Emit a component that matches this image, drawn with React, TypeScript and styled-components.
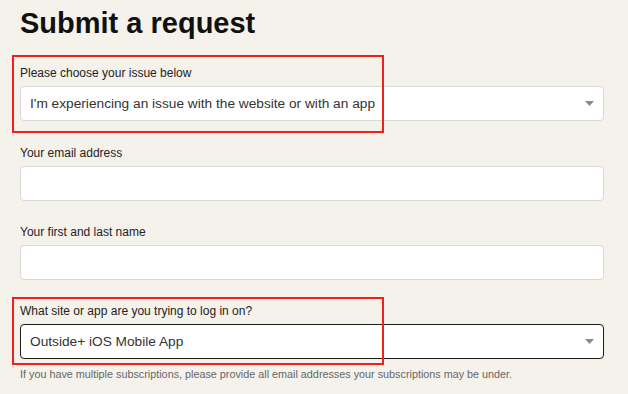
import React from "react";
import styled, { createGlobalStyle } from "styled-components";

const GlobalStyle = createGlobalStyle`
  html, body {
    margin: 0;
    padding: 0;
    background: #f5f2ec;
  }
  body {
    font-family: "Liberation Sans", Arial, Helvetica, sans-serif;
    color: #1a1a1a;
  }
`;

const Page = styled.div`
  padding: 0 24px 0 20px;
  min-height: 394px;
`;

const Title = styled.h1`
  margin: 6px 0 23px;
  font-size: 29px;
  line-height: 35px;
  font-weight: 700;
  color: #111;
`;

const Group = styled.div<{ $space?: number }>`
  margin-bottom: ${(p) => p.$space ?? 22}px;
`;

// label + control, so the annotation box can sit around just that part
const Block = styled.div`
  position: relative;
`;

const Label = styled.label`
  display: block;
  font-size: 12px;
  line-height: 18px;
  color: #222;
  margin-bottom: 4px;
`;

const Field = styled.div<{ $focused?: boolean }>`
  position: relative;
  box-sizing: border-box;
  height: 35px;
  display: flex;
  align-items: center;
  padding: 0 30px 0 9px;
  background: #fff;
  border: 1px solid ${(p) => (p.$focused ? "#1c1c1c" : "#d9d9d9")};
  border-radius: 4px;
  font-size: 13.7px;
  color: #333;
`;

const TextInput = styled.input`
  display: block;
  box-sizing: border-box;
  width: 100%;
  height: 35px;
  padding: 0 10px;
  background: #fff;
  border: 1px solid #d9d9d9;
  border-radius: 4px;
  font: inherit;
  font-size: 14px;
  outline: none;
`;

const Caret = styled.svg`
  position: absolute;
  right: 9px;
  top: 14px;
`;

const Hint = styled.p`
  margin: 8px 0 0;
  font-size: 10.8px;
  line-height: 14px;
  color: #666;
`;

const Highlight = styled.div<{ $top: number; $bottom: number }>`
  position: absolute;
  left: -8px;
  width: 372px;
  top: ${(p) => p.$top}px;
  bottom: ${(p) => p.$bottom}px;
  box-sizing: border-box;
  border: 2px solid #f2201c;
  pointer-events: none;
`;

const Select = ({ value, focused }: { value: string; focused?: boolean }) => (
  <Field $focused={focused}>
    {value}
    <Caret width="9" height="5" viewBox="0 0 9 5">
      <path d="M0 0h9L4.5 5z" fill="#8a8a8a" />
    </Caret>
  </Field>
);

const App = () => {
  return (
    <>
      <GlobalStyle />
      <Page>
        <Title>Submit a request</Title>
        <Group $space={23}>
          <Block>
            <Label>Please choose your issue below</Label>
            <Select value="I'm experiencing an issue with the website or with an app" />
            <Highlight $top={-9} $bottom={-12} />
          </Block>
        </Group>
        <Group>
          <Label>Your email address</Label>
          <TextInput type="email" />
        </Group>
        <Group>
          <Label>Your first and last name</Label>
          <TextInput type="text" />
        </Group>
        <Group>
          <Block>
            <Label>What site or app are you trying to log in on?</Label>
            <Select value="Outside+ iOS Mobile App" focused />
            <Highlight $top={-5} $bottom={-6} />
          </Block>
          <Hint>
            If you have multiple subscriptions, please provide all email addresses your
            subscriptions may be under.
          </Hint>
        </Group>
      </Page>
    </>
  );
};

export default App;
